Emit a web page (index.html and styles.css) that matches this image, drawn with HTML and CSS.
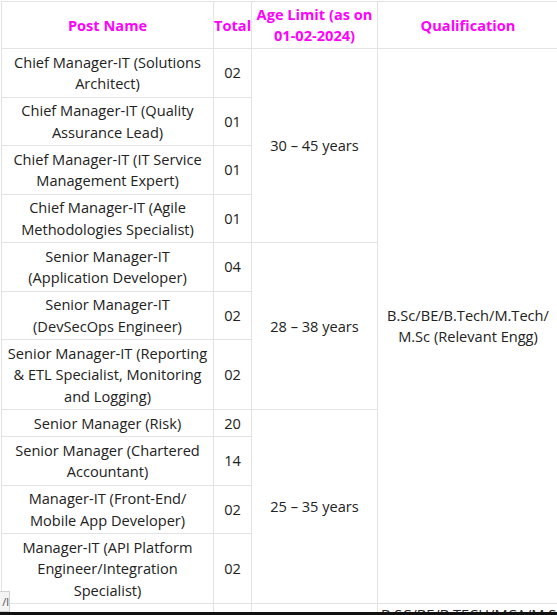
FILE: index.html
```html
<!DOCTYPE html>
<html lang="en">
<head>
<meta charset="utf-8">
<title>Posts</title>
<link rel="stylesheet" href="styles.css">
</head>
<body>
<table class="posts">
  <colgroup>
    <col class="c-post">
    <col class="c-total">
    <col class="c-age">
    <col class="c-qual">
  </colgroup>
  <thead>
    <tr>
      <th>Post Name</th>
      <th class="tight">Total</th>
      <th>Age Limit (as on<br>01-02-2024)</th>
      <th>Qualification</th>
    </tr>
  </thead>
  <tbody>
    <tr>
      <td>Chief Manager-IT (Solutions<br>Architect)</td>
      <td>02</td>
      <td rowspan="4">30 – 45 years</td>
      <td rowspan="11">B.Sc/BE/B.Tech/M.Tech/<br>M.Sc (Relevant Engg)</td>
    </tr>
    <tr>
      <td>Chief Manager-IT (Quality<br>Assurance Lead)</td>
      <td>01</td>
    </tr>
    <tr>
      <td>Chief Manager-IT (IT Service<br>Management Expert)</td>
      <td>01</td>
    </tr>
    <tr>
      <td>Chief Manager-IT (Agile<br>Methodologies Specialist)</td>
      <td>01</td>
    </tr>
    <tr>
      <td>Senior Manager-IT<br>(Application Developer)</td>
      <td>04</td>
      <td rowspan="3">28 – 38 years</td>
    </tr>
    <tr>
      <td>Senior Manager-IT<br>(DevSecOps Engineer)</td>
      <td>02</td>
    </tr>
    <tr>
      <td>Senior Manager-IT (Reporting<br>&amp; ETL Specialist, Monitoring<br>and Logging)</td>
      <td>02</td>
    </tr>
    <tr>
      <td>Senior Manager (Risk)</td>
      <td>20</td>
      <td rowspan="4">25 – 35 years</td>
    </tr>
    <tr>
      <td>Senior Manager (Chartered<br>Accountant)</td>
      <td>14</td>
    </tr>
    <tr>
      <td>Manager-IT (Front-End/<br>Mobile App Developer)</td>
      <td>02</td>
    </tr>
    <tr>
      <td>Manager-IT (API Platform<br>Engineer/Integration<br>Specialist)</td>
      <td>02</td>
    </tr>
    <tr class="next-row">
      <td></td>
      <td></td>
      <td></td>
      <td class="top">B.SC/BE/B.TECH/MCA/M.SC</td>
    </tr>
  </tbody>
</table>
<div class="status-tip">l/</div>
<div class="bottom-edge"></div>
</body>
</html>
```

FILE: styles.css
```css
html, body {
  margin: 0;
  padding: 0;
  overflow: hidden;
  background: #ffffff;
}

body {
  font-family: "Open Sans", "Noto Sans", sans-serif;
  font-size: 14.6px;
  color: #222222;
}

.posts {
  border-collapse: collapse;
  table-layout: fixed;
  width: 557px;
  margin: 1px 0 0 1px;
  border: 1px solid #e3e3e3;
}

.c-post { width: 212px; }
.c-total { width: 38px; }
.c-age { width: 126px; }
.c-qual { width: 181px; }

.posts th,
.posts td {
  border: 1px solid #e3e3e3;
  padding: 2.25px 3px;
  line-height: 21.5px;
  text-align: center;
  vertical-align: middle;
}

.posts th {
  color: #ff00ff;
  font-weight: 700;
  font-size: 14.6px;
  line-height: 21.2px;
  padding-top: 2px;
  padding-bottom: 2px;
}

.posts th.tight {
  padding-left: 0;
  padding-right: 0;
}

.posts .next-row td {
  height: 40px;
}

.posts td.top {
  vertical-align: top;
  padding-top: 0;
}

.status-tip {
  position: fixed;
  left: 0;
  bottom: 3px;
  width: 9px;
  height: 19px;
  overflow: hidden;
  background: #f4f4f4;
  border: 1px solid #d0d0d0;
  border-left: none;
  font-size: 11px;
  line-height: 19px;
  color: #555;
  white-space: nowrap;
  direction: rtl;
}

.bottom-edge {
  position: fixed;
  left: 0;
  right: 0;
  bottom: 0;
  height: 3px;
  background: #111111;
}
```
